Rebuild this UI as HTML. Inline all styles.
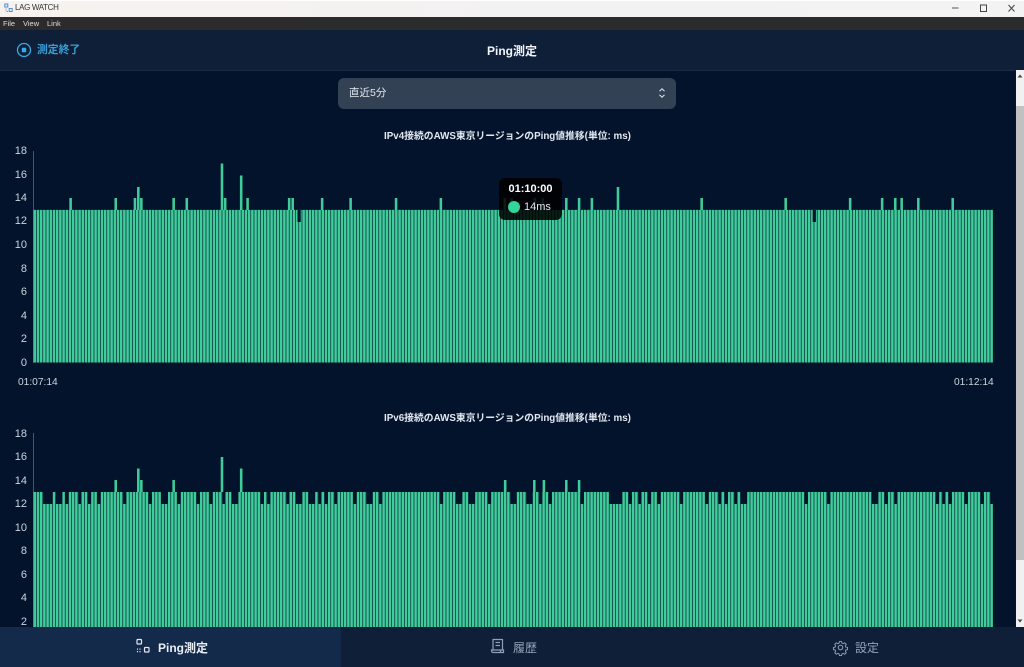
<!DOCTYPE html>
<html lang="ja">
<head>
<meta charset="utf-8">
<title>LAG WATCH</title>
<style>
html,body{margin:0;padding:0;width:1024px;height:667px;overflow:hidden;background:#03132b}
body{position:relative;font-family:"Liberation Sans","Noto Sans CJK JP",sans-serif}
.a{position:absolute;white-space:nowrap}
.tick{position:absolute;width:28px;left:-1px;text-align:right;font-size:11px;line-height:14px;color:#cbd5e1}
.tt{position:absolute;left:0;width:1015px;text-align:center;font-size:9.8px;font-weight:700;line-height:14px;color:#e2e8f0}
</style>
</head>
<body>
<!-- charts -->
<svg class="a" style="left:0;top:0" width="1024" height="667" viewBox="0 0 1024 667">
  <line x1="33.5" y1="151" x2="33.5" y2="363" stroke="#475569" stroke-width="1"/>
  <line x1="33.5" y1="433" x2="33.5" y2="628" stroke="#475569" stroke-width="1"/>
  <g transform="translate(33.5 0) scale(3.2 1)" fill="none">
    <!-- chart 1 -->
    <path d="M0 286.2H300" stroke="#40cc9a" stroke-width="152.6" stroke-dasharray=".8 .2"/>
    <path d="M83 210V222M244 210V222" stroke="#03132b" stroke-width="1"/>
    <path stroke="#40cc9a" stroke-width=".8" d="M11.600 210V198M25.700 210V198M31.700 210V198M32.750 210V187M33.700 210V198M43.800 210V198M47.900 210V198M58.900 210V163.500M59.900 210V198M64.900 210V175.500M66.900 210V198M79.900 210V198M81 210V198M90.200 210V198M99.100 210V198M113.300 210V198M127.300 210V198M147.300 210V198M149.400 210V198M156.700 210V198M159.200 210V198M166.500 210V198M170.500 210V198M174.500 210V198M182.650 210V187M208.800 210V198M235.060 210V198M255.200 210V198M265.200 210V198M269.300 210V198M271.300 210V198M276.500 210V198M287.250 210V198"/>
    <!-- chart 2 -->
    <path d="M0 559.500H300" stroke="#40cc9a" stroke-width="135" stroke-dasharray=".8 .2"/>
    <path stroke="#03132b" stroke-width="1" d="M3.500 492V504M4.500 492V504M5.500 492V504M7.500 492V504M8.500 492V504M10.500 492V504M14.500 492V504M17.500 492V504M20.500 492V504M28.500 492V504M36.500 492V504M40.500 492V504M41.500 492V504M45.500 492V504M51.500 492V504M55.500 492V504M59.500 492V504M62.500 492V504M63.500 492V504M71.500 492V504M73.500 492V504M79.500 492V504M82.500 492V504M83.500 492V504M86.500 492V504M87.500 492V504M89.500 492V504M91.500 492V504M94.500 492V504M100.500 492V504M104.500 492V504M105.500 492V504M108.500 492V504M127.500 492V504M132.500 492V504M133.500 492V504M136.500 492V504M137.500 492V504M142.500 492V504M149.500 492V504M150.500 492V504M154.500 492V504M155.500 492V504M158.500 492V504M161.500 492V504M171.500 492V504M180.500 492V504M181.500 492V504M182.500 492V504M183.500 492V504M186.500 492V504M189.500 492V504M192.500 492V504M195.500 492V504M202.500 492V504M210.500 492V504M214.500 492V504M216.500 492V504M219.500 492V504M221.500 492V504M222.500 492V504M241.500 492V504M248.500 492V504M262.500 492V504M263.500 492V504M266.500 492V504M269.500 492V504M282.500 492V504M284.500 492V504M286.500 492V504M291.500 492V504M296.500 492V504M299.500 492V504"/>
    <path stroke="#40cc9a" stroke-width=".8" d="M25.700 492V480M32.750 492V468.500M33.700 492V480M43.800 492V480M58.900 492V457M64.900 492V468.500M147.400 492V480M156.500 492V480M159.500 492V480M166.500 492V480M170.500 492V480"/>
  </g>
</svg>

<!-- y ticks chart 1 -->
<div class="tick" style="top:144px">18</div>
<div class="tick" style="top:168px">16</div>
<div class="tick" style="top:191px">14</div>
<div class="tick" style="top:214px">12</div>
<div class="tick" style="top:238px">10</div>
<div class="tick" style="top:262px">8</div>
<div class="tick" style="top:285px">6</div>
<div class="tick" style="top:309px">4</div>
<div class="tick" style="top:332px">2</div>
<div class="tick" style="top:356px">0</div>
<div class="a" style="left:18px;top:376px;font-size:10.200px;line-height:14px;color:#cbd5e1">01:07:14</div>
<div class="a" style="left:954px;top:376px;font-size:10.200px;line-height:14px;color:#cbd5e1">01:12:14</div>

<!-- y ticks chart 2 -->
<div class="tick" style="top:427px">18</div>
<div class="tick" style="top:450px">16</div>
<div class="tick" style="top:474px">14</div>
<div class="tick" style="top:497px">12</div>
<div class="tick" style="top:521px">10</div>
<div class="tick" style="top:544px">8</div>
<div class="tick" style="top:568px">6</div>
<div class="tick" style="top:591px">4</div>
<div class="tick" style="top:615px">2</div>

<div class="tt" style="top:130px">IPv4接続のAWS東京リージョンのPing値推移(単位: ms)</div>
<div class="tt" style="top:412px">IPv6接続のAWS東京リージョンのPing値推移(単位: ms)</div>

<!-- tooltip -->
<div class="a" style="left:499px;top:178px;width:63px;height:42px;background:rgba(0,0,0,.86);border-radius:6px"></div>
<div class="a" style="left:499px;top:182px;width:63px;text-align:center;font-size:11px;font-weight:700;line-height:14px;color:#fff">01:10:00</div>
<div class="a" style="left:508px;top:201px;width:12px;height:12px;border-radius:50%;background:#34d399"></div>
<div class="a" style="left:524px;top:200px;font-size:11px;line-height:14px;color:#e5e7eb">14ms</div>

<!-- dropdown -->
<div class="a" style="left:338px;top:78px;width:338px;height:31px;background:#334155;border-radius:6px"></div>
<div class="a" style="left:349px;top:86px;font-size:10.500px;line-height:14px;color:#e2e8f0">直近5分</div>
<svg class="a" style="left:657px;top:87px" width="10" height="12" viewBox="0 0 10 12" fill="none" stroke="#cbd5e1" stroke-width="1.100"><path d="M2.500 4.200 5 1.800 7.500 4.200M2.500 7.800 5 10.200 7.500 7.800"/></svg>

<!-- title bar -->
<div class="a" style="left:0;top:0;width:1024px;height:17px;background:linear-gradient(90deg,#f7f2ee,#f3f2f2 50%,#f3f3f4);border-top:1px solid #fff;box-sizing:border-box"></div>
<svg class="a" style="left:4px;top:3px" width="9" height="10" viewBox="0 0 9 10" fill="none" stroke="#4f8fd0" stroke-width="1"><rect x=".8" y="1" width="3" height="3"/><rect x="5.200" y="5.500" width="3" height="3"/><path d="M2 5.500V8.500H4" stroke-dasharray="1 1"/></svg>
<div class="a" style="left:15px;top:2px;font-size:8px;letter-spacing:-.35px;line-height:12px;color:#333">LAG WATCH</div>
<svg class="a" style="left:948px;top:2px" width="72" height="13" viewBox="0 0 72 13" fill="none" stroke="#555" stroke-width="1"><path d="M4 6H10.500"/><rect x="32.500" y="3" width="6" height="6.500" stroke="#444"/><path d="M60.500 3 66.500 9.500M66.500 3 60.500 9.500" stroke="#444"/></svg>

<!-- menu bar -->
<div class="a" style="left:0;top:17px;width:1024px;height:13px;background:#2b2b2b"></div>
<div class="a" style="left:3px;top:18px;font-size:7.500px;line-height:11px;color:#ddd">File</div>
<div class="a" style="left:23px;top:18px;font-size:7.500px;line-height:11px;color:#ddd">View</div>
<div class="a" style="left:47px;top:18px;font-size:7.500px;line-height:11px;color:#ddd">Link</div>

<!-- header -->
<div class="a" style="left:0;top:30px;width:1024px;height:40px;background:#0f1f38;border-bottom:1px solid #1c2b43;box-sizing:content-box"></div>
<svg class="a" style="left:16px;top:42px" width="16" height="16" viewBox="0 0 16 16" fill="none"><circle cx="8" cy="8" r="6.500" stroke="#38a9e4" stroke-width="1.300"/><rect x="5.800" y="5.800" width="4.400" height="4.400" rx=".6" fill="#38a9e4"/></svg>
<div class="a" style="left:37px;top:43px;font-size:10.800px;font-weight:700;line-height:14px;color:#38a0d8">測定終了</div>
<div class="a" style="left:0;top:43px;width:1024px;text-align:center;font-size:12px;font-weight:700;line-height:16px;color:#f1f5f9">Ping測定</div>

<!-- scrollbar -->
<div class="a" style="left:1015px;top:70px;width:9px;height:557px;background:#f1f1f1;border-left:1px solid #0a1526;box-sizing:border-box"></div>
<div class="a" style="left:1016px;top:106px;width:8px;height:454px;background:#c1c1c1"></div>
<svg class="a" style="left:1016px;top:72px" width="8" height="8" viewBox="0 0 8 8"><path d="M1.500 5.500H6.500L4 2.500Z" fill="#444"/></svg>
<svg class="a" style="left:1016px;top:617px" width="8" height="8" viewBox="0 0 8 8"><path d="M1.500 2.500H6.500L4 5.500Z" fill="#444"/></svg>

<!-- bottom nav -->
<div class="a" style="left:0;top:627px;width:1024px;height:40px;background:#0f1f38"></div>
<div class="a" style="left:0;top:627px;width:341px;height:40px;background:#132a4a"></div>
<svg class="a" style="left:135px;top:638px" width="16" height="16" viewBox="0 0 16 16" fill="none" stroke="#e2e8f0" stroke-width="1.200"><rect x="2" y="1.500" width="4.500" height="4.500" rx=".8"/><rect x="9.500" y="9.500" width="4.500" height="4.500" rx=".8"/><path d="M2.500 10.500V11.700M5 10.500V11.700M2.500 13V14.200M5 13V14.200" stroke-width="1.100"/></svg>
<div class="a" style="left:158px;top:640px;font-size:12px;font-weight:700;line-height:16px;color:#e8edf4">Ping測定</div>
<svg class="a" style="left:490px;top:638px" width="15" height="16" viewBox="0 0 15 16" fill="none" stroke="#8ea0b8" stroke-width="1.200"><path d="M3 12V1.500H12.500V11.500"/><path d="M5.500 4.500H10M5.500 7.500H10"/><path d="M1.500 12H10.500V14.500H3C2 14.500 1.500 13.500 1.500 12ZM10.500 12H13.500V14.500H10.500"/></svg>
<div class="a" style="left:513px;top:640px;font-size:12px;line-height:16px;color:#94a3b8">履歴</div>
<svg class="a" style="left:832px;top:639px" width="17" height="17" viewBox="0 0 24 24" fill="none" stroke="#8ea0b8" stroke-width="1.500" stroke-linejoin="round"><circle cx="12" cy="12" r="3.200"/><path d="M10.300 2.500h3.400l.6 2.800 1.900.8 2.400-1.500 2.400 2.400-1.500 2.400.8 1.900 2.800.6v3.400l-2.800.6-.8 1.900 1.500 2.400-2.400 2.400-2.400-1.500-1.900.8-.6 2.800h-3.400l-.6-2.800-1.900-.8-2.400 1.500-2.400-2.400 1.500-2.400-.8-1.900-2.800-.6v-3.400l2.800-.6.8-1.900-1.500-2.400 2.400-2.400 2.400 1.500 1.900-.8z" transform="translate(1.200 1.200) scale(.9)"/></svg>
<div class="a" style="left:855px;top:640px;font-size:12px;line-height:16px;color:#94a3b8">設定</div>
</body>
</html>
